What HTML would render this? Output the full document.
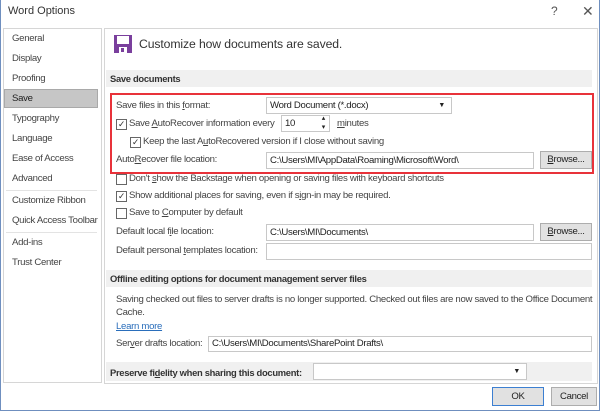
<!DOCTYPE html><html><head><style>
body{margin:0;width:600px;height:412px;overflow:hidden;background:#fff;font-family:"Liberation Sans",sans-serif;font-size:9.6px;letter-spacing:-0.3px;color:#444;position:relative}
.a{position:absolute;white-space:nowrap}
.win{position:absolute;left:0;top:0;width:598px;height:410px;border:1px solid #6f8fbf;border-top:none}
.panel{position:absolute;border:1px solid #d6d6d6;background:#fff}
.band{position:absolute;background:#f0f0f0;font-weight:bold;color:#333;font-size:9.4px}
.in{position:absolute;border:1px solid #c8c8c8;background:#fff;box-sizing:border-box;padding-left:3px;line-height:15px;color:#222}
.btn{position:absolute;border:1px solid #adadad;background:#e1e1e1;box-sizing:border-box;text-align:center;color:#222}
.cb{position:absolute;width:11px;height:11px;border:1px solid #666;box-sizing:border-box;background:#fff;font-size:9px;line-height:9px;text-align:center;color:#333}
.sep{position:absolute;height:1px;background:#e3e3e3}
</style></head><body>
<div class="win"></div>
<div class="a" style="left:8px;top:5px;font-size:11px;color:#333;letter-spacing:0">Word Options</div>
<div class="a" style="left:551px;top:4px;font-size:12px;color:#555">?</div>
<div class="a" style="left:582px;top:3px;font-size:14px;color:#555">✕</div>
<div class="panel" style="left:3px;top:28px;width:97px;height:353px"></div>
<div class="panel" style="left:104px;top:28px;width:492px;height:354px"></div>
<div class="a" style="left:12px;top:33px">General</div>
<div class="a" style="left:12px;top:53px">Display</div>
<div class="a" style="left:12px;top:73px">Proofing</div>
<div class="a" style="left:4px;top:89px;width:94px;height:19px;background:#c6c6c6;border:1px solid #a9a9a9;box-sizing:border-box"></div>
<div class="a" style="left:12px;top:93px;color:#222">Save</div>
<div class="a" style="left:12px;top:113px">Typography</div>
<div class="a" style="left:12px;top:133px">Language</div>
<div class="a" style="left:12px;top:153px">Ease of Access</div>
<div class="a" style="left:12px;top:173px">Advanced</div>
<div class="sep" style="left:6px;top:190px;width:91px"></div>
<div class="a" style="left:12px;top:195px">Customize Ribbon</div>
<div class="a" style="left:12px;top:215px">Quick Access Toolbar</div>
<div class="sep" style="left:6px;top:232px;width:91px"></div>
<div class="a" style="left:12px;top:237px">Add-ins</div>
<div class="a" style="left:12px;top:257px">Trust Center</div>
<svg class="a" style="left:114px;top:35px" width="18" height="18"><rect x="0" y="0" width="18" height="18" fill="#7a3f9d"/><rect x="3" y="1" width="12" height="8" fill="#fff"/><rect x="5" y="12" width="8" height="6" fill="#fff"/><rect x="7" y="13" width="3" height="4" fill="#7a3f9d"/></svg>
<div class="a" style="left:139px;top:37px;font-size:12.2px;color:#333;letter-spacing:-0.1px">Customize how documents are saved.</div>
<div class="band" style="left:106px;top:70px;width:486px;height:17px"><span class="a" style="left:4px;top:3px">Save documents</span></div>
<div class="a" style="left:116px;top:100px">Save files in this <u>f</u>ormat:</div>
<div class="in" style="left:266px;top:97px;width:186px;height:17px">Word Document (*.docx)<span style="position:absolute;right:6px;top:0;font-size:7px">▼</span></div>
<div class="cb" style="left:116px;top:119px">✓</div>
<div class="a" style="left:129px;top:118px">Save <u>A</u>utoRecover information every</div>
<div class="in" style="left:281px;top:115px;width:49px;height:17px">10<span style="position:absolute;right:4px;top:-2px;font-size:7px;line-height:9px">▴<br>▾</span></div>
<div class="a" style="left:337px;top:118px"><u>m</u>inutes</div>
<div class="cb" style="left:130px;top:137px">✓</div>
<div class="a" style="left:143px;top:136px">Keep the last A<u>u</u>toRecovered version if I close without saving</div>
<div class="a" style="left:116px;top:154px">Auto<u>R</u>ecover file location:</div>
<div class="in" style="left:266px;top:152px;width:268px;height:17px">C:\Users\MI\AppData\Roaming\Microsoft\Word\</div>
<div class="btn" style="left:540px;top:151px;width:52px;height:18px;line-height:16px"><u>B</u>rowse...</div>
<div class="a" style="left:110px;top:93px;width:484px;height:81px;border:2px solid #e8323a;box-sizing:border-box"></div>
<div class="cb" style="left:116px;top:174px"></div>
<div class="a" style="left:129px;top:173px">Don't <u>s</u>how the Backstage when opening or saving files with keyboard shortcuts</div>
<div class="cb" style="left:116px;top:191px">✓</div>
<div class="a" style="left:129px;top:190px">Show additional places for saving, even if s<u>i</u>gn-in may be required.</div>
<div class="cb" style="left:116px;top:208px"></div>
<div class="a" style="left:129px;top:207px">Save to <u>C</u>omputer by default</div>
<div class="a" style="left:116px;top:226px">Default local f<u>i</u>le location:</div>
<div class="in" style="left:266px;top:224px;width:268px;height:17px">C:\Users\MI\Documents\</div>
<div class="btn" style="left:540px;top:223px;width:52px;height:18px;line-height:16px"><u>B</u>rowse...</div>
<div class="a" style="left:116px;top:245px">Default personal <u>t</u>emplates location:</div>
<div class="in" style="left:266px;top:243px;width:326px;height:17px"></div>
<div class="band" style="left:106px;top:270px;width:486px;height:17px"><span class="a" style="left:4px;top:3px">Offline editing options for document management server files</span></div>
<div class="a" style="left:116px;top:294px">Saving checked out files to server drafts is no longer supported. Checked out files are now saved to the Office Document</div>
<div class="a" style="left:116px;top:307px">Cache.</div>
<div class="a" style="left:116px;top:321px;color:#2a6ebb;text-decoration:underline">Learn more</div>
<div class="a" style="left:116px;top:338px">Ser<u>v</u>er drafts location:</div>
<div class="in" style="left:208px;top:336px;width:384px;height:16px;line-height:14px">C:\Users\MI\Documents\SharePoint Drafts\</div>
<div class="band" style="left:106px;top:362px;width:486px;height:19px"><span class="a" style="left:4px;top:5px">Preserve fi<u>d</u>elity when sharing this document:</span></div>
<div class="in" style="left:313px;top:363px;width:214px;height:17px"><span style="position:absolute;right:6px;top:0;font-size:7px">▼</span></div>
<div class="btn" style="left:492px;top:387px;width:52px;height:19px;line-height:17px;border:1px solid #3c7fd1">OK</div>
<div class="btn" style="left:551px;top:387px;width:46px;height:19px;line-height:17px">Cancel</div>
</body></html>
